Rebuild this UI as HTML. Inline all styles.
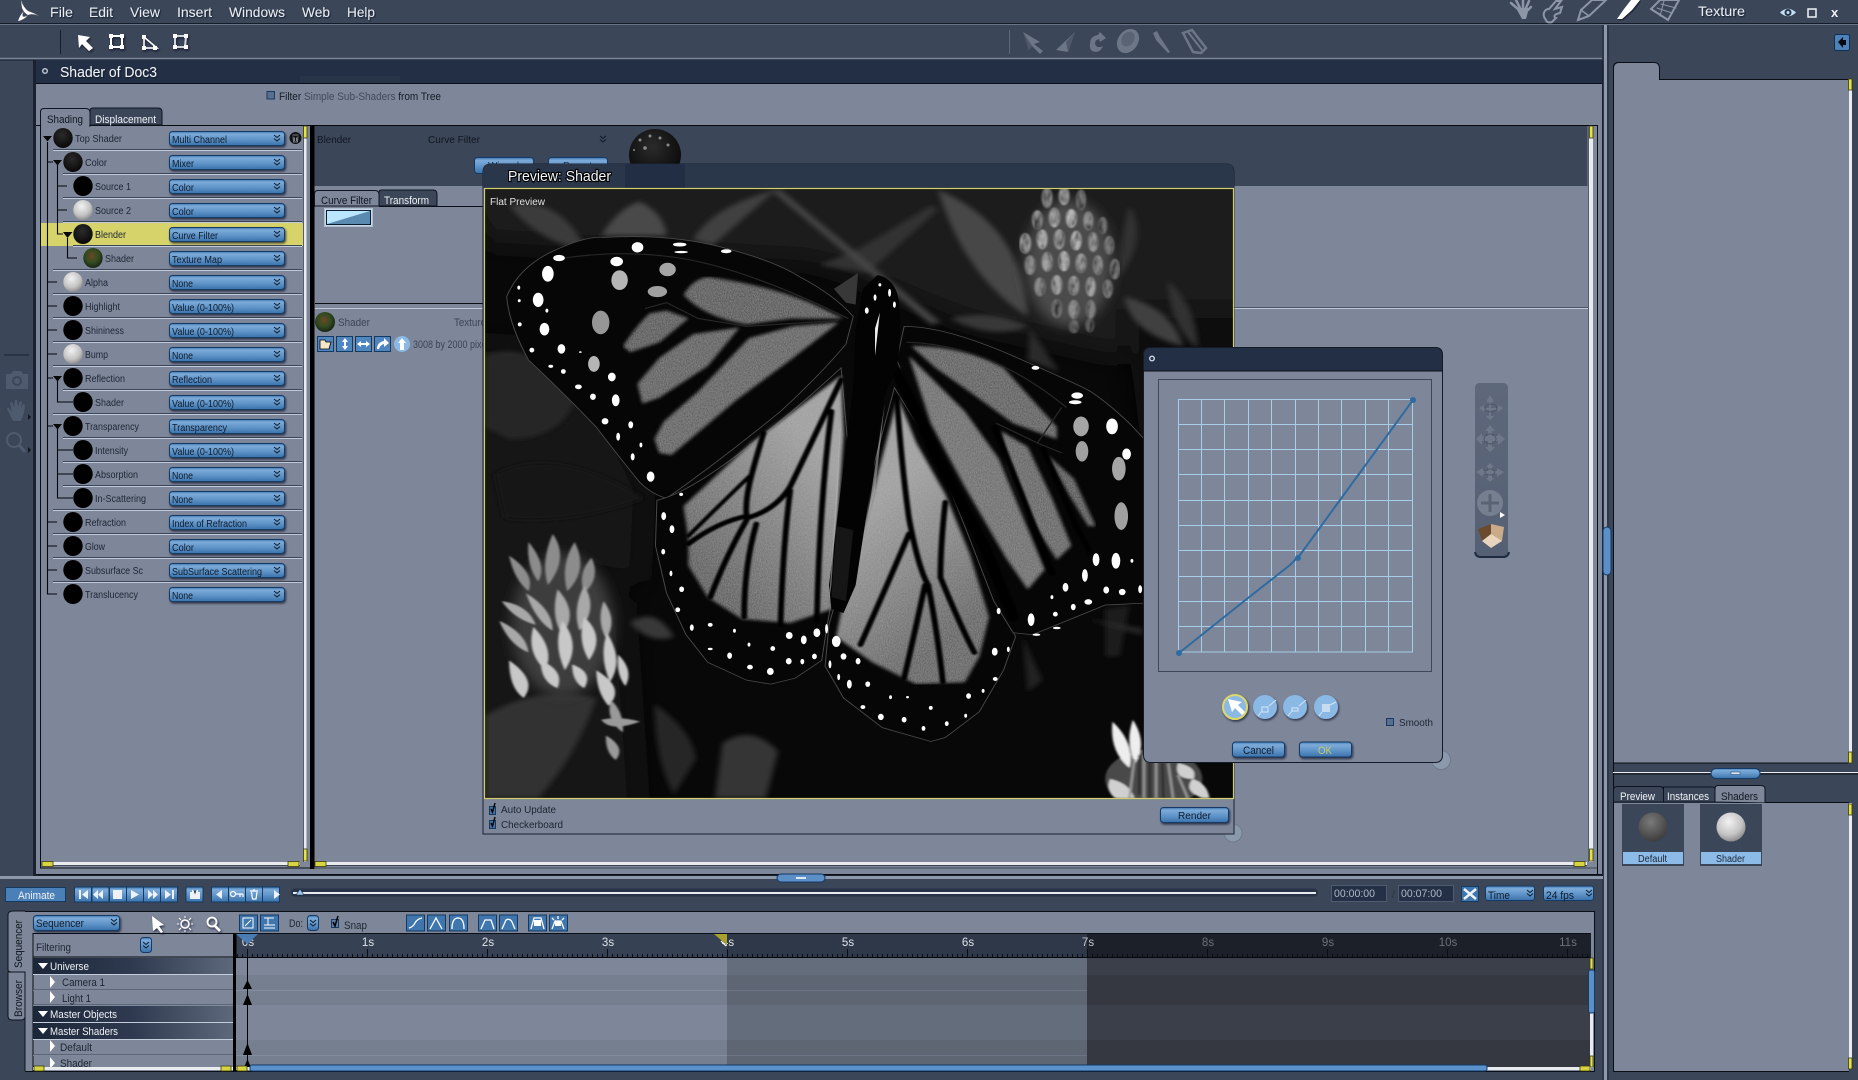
<!DOCTYPE html>
<html lang="en"><head><meta charset="utf-8"><title>Shader of Doc3</title>
<style>
html,body{margin:0;padding:0;background:#3b4658;width:1858px;height:1080px;overflow:hidden}
svg{display:block}
text{font-family:"Liberation Sans",sans-serif;font-size:10px;fill:#1d2532}
.l{fill:#1e2633}
.t{fill:#10161f}
.w{fill:#f0f3f7}
.m{font-size:14px;fill:#e9edf3;filter:url(#ts)}
.d{fill:#0f1b2b}
</style></head><body>
<svg xmlns="http://www.w3.org/2000/svg" width="1858" height="1080" viewBox="0 0 1858 1080">
<defs>
<linearGradient id="bl" x1="0" y1="0" x2="0" y2="1"><stop offset="0" stop-color="#3e76b0"/><stop offset=".18" stop-color="#7cabd9"/><stop offset=".55" stop-color="#6195c9"/><stop offset="1" stop-color="#3a72ab"/></linearGradient>
<linearGradient id="rowd" x1="0" y1="0" x2="1" y2="0"><stop offset="0" stop-color="#1c2639"/><stop offset=".5" stop-color="#2f3a50"/><stop offset="1" stop-color="#5d687b"/></linearGradient>
<linearGradient id="nav" x1="0" y1="0" x2="0" y2="1"><stop offset="0" stop-color="#5e687b"/><stop offset="1" stop-color="#566074"/></linearGradient>
<linearGradient id="hl" gradientUnits="userSpaceOnUse" x1="740" y1="720" x2="440" y2="940"><stop offset="0" stop-color="#a0a0a0"/><stop offset=".5" stop-color="#808080"/><stop offset="1" stop-color="#606060"/></linearGradient>
<linearGradient id="hr" gradientUnits="userSpaceOnUse" x1="800" y1="800" x2="1040" y2="1060"><stop offset="0" stop-color="#a0a0a0"/><stop offset=".5" stop-color="#858585"/><stop offset="1" stop-color="#656565"/></linearGradient>
<radialGradient id="sw" cx=".42" cy=".32" r=".75"><stop offset="0" stop-color="#f2f2f2"/><stop offset=".6" stop-color="#c4c4c4"/><stop offset="1" stop-color="#7f7f7f"/></radialGradient>
<radialGradient id="sg" cx=".42" cy=".32" r=".75"><stop offset="0" stop-color="#7a7a7a"/><stop offset="1" stop-color="#383838"/></radialGradient>
<radialGradient id="st" cx=".45" cy=".35" r=".7"><stop offset="0" stop-color="#2b2b2b"/><stop offset="1" stop-color="#060606"/></radialGradient>
<radialGradient id="sv" cx=".45" cy=".4" r=".65"><stop offset="0" stop-color="#6a4a24"/><stop offset=".55" stop-color="#2f4a20"/><stop offset="1" stop-color="#141d12"/></radialGradient>
<filter id="ts" x="-10%" y="-20%" width="120%" height="150%"><feDropShadow dx="1" dy="1" stdDeviation=".6" flood-color="#10182a" flood-opacity=".9"/></filter>
<filter id="sh" x="-30%" y="-30%" width="170%" height="170%"><feDropShadow dx="1" dy="1.5" stdDeviation="1" flood-color="#101826" flood-opacity=".75"/></filter>
<filter id="b35" x="-50%" y="-50%" width="200%" height="200%"><feGaussianBlur stdDeviation="35"/></filter>
<filter id="b10" x="-50%" y="-50%" width="200%" height="200%"><feGaussianBlur stdDeviation="14"/></filter>
<filter id="b7" x="-20%" y="-20%" width="140%" height="140%"><feGaussianBlur stdDeviation="6"/></filter>
<filter id="b4" x="-20%" y="-20%" width="140%" height="140%"><feGaussianBlur stdDeviation="4"/></filter>
<filter id="b2" x="-20%" y="-20%" width="140%" height="140%"><feGaussianBlur stdDeviation="2"/></filter>
<filter id="n" x="0" y="0" width="100%" height="100%"><feTurbulence type="fractalNoise" baseFrequency=".5 .25" numOctaves="2" seed="4"/><feColorMatrix values="0 0 0 0 .6  0 0 0 0 .6  0 0 0 0 .6  .45 0 0 0 -.12"/><feComposite in2="SourceAlpha" operator="in"/><feMerge><feMergeNode in="SourceGraphic"/><feMergeNode/></feMerge></filter>
<filter id="f" x="0" y="0" width="100%" height="100%"><feTurbulence type="fractalNoise" baseFrequency=".07 .035" numOctaves="2" seed="9"/><feColorMatrix values="0 0 0 0 0  0 0 0 0 0  0 0 0 0 0  1.800 0 0 0 -.62"/><feComposite in2="SourceAlpha" operator="in"/><feMerge><feMergeNode in="SourceGraphic"/><feMergeNode/></feMerge></filter>
<clipPath id="img"><rect x="485" y="189" width="748" height="609"/></clipPath>
<clipPath id="trackc"><rect x="236" y="957" width="1355" height="110"/></clipPath>
<clipPath id="listc"><rect x="33" y="957" width="200" height="110"/></clipPath>
<pattern id="ticks" x="247" y="954" width="5" height="3" patternUnits="userSpaceOnUse"><rect width="1" height="3" fill="#0a0d14"/></pattern>
<g id="chev" fill="none" stroke="#0e1a2a" stroke-width="1"><path d="M-3-3 0-.5 3-3"/><path d="M-3 .5 0 3 3 .5"/></g>
<g id="dd"><rect x=".5" y=".5" width="115" height="14" rx="3" fill="url(#bl)" stroke="#133a66" filter="url(#sh)"/><use href="#chev" x="108" y="7"/></g>
<g id="btn"><rect x=".5" y=".5" width="17" height="15" fill="url(#bl)" stroke="#123a63"/></g>
<g id="bt2"><rect x=".5" y=".5" width="18" height="16" fill="#3f76ae" stroke="#123a63"/></g>
</defs>

<!-- base -->
<rect width="1858" height="1080" fill="#3b4658"/>
<path d="M0 23.5H1858" stroke="#141c2a" stroke-width="1"/><path d="M0 24.5H1858" stroke="#697488"/>
<path d="M0 58.5H1602" stroke="#7a8597" stroke-width="1.4"/><path d="M0 60H1602" stroke="#1a2333"/>
<path d="M1603 25V1080" stroke="#1f2837"/><rect x="1604" y="25" width="3" height="1055" fill="#8d98aa"/><path d="M1608 25V1080" stroke="#1f2837"/>

<!-- logo/menu -->
<path d="M21 0Q23 7 28 11Q34 13 40 16.500Q33 13 28 15Q24 13 22 8Q21.500 4 21 0Z" fill="#fff"/>
<path d="M24 11Q20 15 18 21Q24 20 28 15Q24 18 22.500 16Q22.500 13 24 11Z" fill="#fff"/>
<text class="m" x="50" y="17" textLength="23" lengthAdjust="spacingAndGlyphs">File</text>
<text class="m" x="89" y="17" textLength="24" lengthAdjust="spacingAndGlyphs">Edit</text>
<text class="m" x="130" y="17" textLength="30" lengthAdjust="spacingAndGlyphs">View</text>
<text class="m" x="177" y="17" textLength="35" lengthAdjust="spacingAndGlyphs">Insert</text>
<text class="m" x="229" y="17" textLength="56" lengthAdjust="spacingAndGlyphs">Windows</text>
<text class="m" x="302" y="17" textLength="28" lengthAdjust="spacingAndGlyphs">Web</text>
<text class="m" x="347" y="17" textLength="28" lengthAdjust="spacingAndGlyphs">Help</text>

<!-- top right -->
<g fill="none" stroke="#8c96a7" stroke-linecap="round">
<path d="M1516 8 1522 19 1526 19 1529 8Z" fill="#8c96a7" stroke="none"/>
<path d="M1518 9 1511 3M1520 8 1516 0M1523 8V0M1526 8 1529 1" stroke-width="2.500"/><path d="M1528 10 1531 7" stroke-width="2.500"/>
<path d="M1546 20C1541 14 1545 9 1549 9L1556 1 1561 1 1555 9 1562 7 1560 13C1554 14 1553 17 1556 18L1552 22C1549 23 1546 22 1546 20Z" stroke-width="2"/>
<path d="M1578 20 1581 10 1592 0H1606L1589 16Z" stroke-width="2"/><path d="M1581 10 1589 16" stroke-width="1.500"/>
<path d="M1651 9 1660 0 1679 0 1668 20Z" stroke-width="2"/>
<path d="M1657 8 1672 13M1661 4 1676 8M1664 1 1660 16" stroke-width="1"/>
</g>
<path d="M1617 19 1624 9 1631 0 1640 0 1632 10 1622 19Z" fill="#fff" filter="url(#ts)"/>
<text class="m" x="1698" y="16" textLength="47" lengthAdjust="spacingAndGlyphs">Texture</text>
<path d="M1780 12.500Q1788 5 1796 12.500Q1788 20 1780 12.500Z" fill="#c5e1f5"/><circle cx="1788" cy="12.500" r="3.500" fill="#27354a"/><circle cx="1788" cy="12.500" r="1.500" fill="#c5e1f5"/>
<rect x="1808" y="9" width="8" height="8" fill="none" stroke="#f0f3f7" stroke-width="1.500"/>
<text x="1831" y="17" style="font-size:13px;font-weight:bold;fill:#f0f3f7">x</text>

<!-- toolbars -->
<path d="M60.500 30V54" stroke="#171f2c"/><path d="M1009.500 30V54" stroke="#5c6779"/>
<g filter="url(#sh)">
<path d="M78 35 90 37 86 41 93 48 89 51 82 44 79 48Z" fill="#fff"/>
<path d="M111 36H122V47H111Z" fill="none" stroke="#fff" stroke-width="2"/><g fill="#fff"><rect x="109" y="34" width="4" height="4"/><rect x="120" y="34" width="4" height="4"/><rect x="109" y="45" width="4" height="4"/><rect x="120" y="45" width="4" height="4"/></g>
<path d="M144 37V48H157Z" fill="none" stroke="#fff" stroke-width="1.500"/><g fill="#fff"><rect x="142" y="35" width="4" height="4"/><rect x="142" y="46" width="4" height="4"/><rect x="153" y="46" width="4" height="4"/></g>
<path d="M175 36H186L185 47H175Z" fill="none" stroke="#cfd5df" stroke-width="2"/><g fill="#fff"><rect x="173" y="34" width="4" height="4"/><rect x="184" y="34" width="4" height="4"/><rect x="173" y="45" width="4" height="4"/><rect x="184" y="45" width="4" height="4"/></g>
</g>
<g fill="#6d7686">
<path d="M1023 32 1040 42 1034 44 1043 51 1040 54 1032 46 1029 50Z"/><path d="M1023 32 1032 46 1029 50Z" fill="#4f5868"/>
<path d="M1075 32 1068 52 1056 50Z"/><path d="M1075 32 1068 52 1066 42Z" fill="#4f5868"/>
<path d="M1090 44Q1090 36 1098 35L1100 32 1106 38 1100 42 1099 39Q1095 40 1095 44Q1097 49 1103 46Q1100 54 1092 51Q1089 48 1090 44Z"/>
<ellipse cx="1128" cy="41" rx="10" ry="13" transform="rotate(35 1128 41)"/><ellipse cx="1128" cy="39" rx="6" ry="8" fill="#5a6372" transform="rotate(35 1128 39)"/>
<path d="M1153 33 1157 31 1160 37 1170 52 1168 53 1156 40Z"/>
<path d="M1183 33 1192 30 1206 48 1201 53 1193 52Z" fill="none" stroke="#6d7686" stroke-width="2.500"/><path d="M1188 32 1202 50" stroke="#6d7686" stroke-width="2"/>
</g>
<rect x="1834.500" y="34.500" width="15" height="16" rx="2" fill="#4d82b8" stroke="#0f2f55"/><path d="M1838 42 1843 37V40H1846V45H1843V48Z" fill="#060a10"/>

<!-- left strip icons -->
<path d="M4 355H29" stroke="#1a2230"/>
<g fill="#4e5a6e">
<path d="M6 374H11L13 371H21L23 374H28V389H6Z"/><circle cx="17" cy="381" r="5" fill="#3b4658"/><circle cx="17" cy="381" r="3"/>
<path d="M10 403 12 402 14 407 15 400 17 400 18 407 20 401 22 402 21 409 23 404 25 405 24 413 21 421H13L7 409 8 407 12 412Z"/>
<circle cx="14" cy="440" r="7" fill="none" stroke="#4e5a6e" stroke-width="2"/><path d="M19 445 25 452" stroke="#4e5a6e" stroke-width="3"/>
</g>
<path d="M28 414 31 417 28 420ZM28 447 31 450 28 453Z" fill="#11161f"/>

<!-- shader panel -->
<rect x="33" y="60" width="1570" height="816" fill="#1a2231"/>
<rect x="36" y="60" width="1566" height="23" fill="#232f44"/>
<rect x="300" y="76" width="100" height="7" fill="#283448"/>
<rect x="36" y="84" width="1566" height="790" fill="#7d8799"/>
<path d="M36 83.500H1602" stroke="#0a0e16"/>
<circle cx="45" cy="71" r="2.300" fill="none" stroke="#b9c3d2" stroke-width="1.500"/>
<text class="w" x="60" y="77" style="font-size:14.500px;filter:url(#ts)" textLength="97" lengthAdjust="spacingAndGlyphs">Shader of Doc3</text>
<rect x="267" y="91.500" width="7.500" height="7.500" fill="#586f90" stroke="#1b3a63"/>
<text x="279" y="100" style="font-size:11px" textLength="162" lengthAdjust="spacingAndGlyphs"><tspan fill="#141b26">Filter </tspan><tspan fill="#3f4a5b">Simple Sub-Shaders </tspan><tspan fill="#141b26">from Tree</tspan></text>

<!-- tabs -->
<path d="M36 125.500H1597" stroke="#070a10" stroke-width="1"/>
<path d="M90 125V111Q90 108 93 108H158Q162 108 162 112V125Z" fill="#3b4658" stroke="#0e1420"/>
<path d="M40.500 125V112Q40.500 108.500 44 108.500H86Q89.500 108.500 90 112V126H40.500Z" fill="#7d8799" stroke="#0e1420"/>
<rect x="41" y="124" width="48" height="3" fill="#7d8799"/>
<text class="t" x="47" y="123" style="font-size:11px" textLength="36" lengthAdjust="spacingAndGlyphs">Shading</text>
<text class="w" x="95" y="123" style="font-size:11px" textLength="61" lengthAdjust="spacingAndGlyphs">Displacement</text>
<path d="M40.500 125V868H310" fill="none" stroke="#0a0e16"/>
<path d="M1597.500 125V875" stroke="#0a0e16"/>
<path d="M36 874.500H1602" stroke="#0a0e16"/>

<!-- tree -->
<rect x="41" y="223" width="262" height="23" fill="#d6d36b"/>
<path d="M53 150H302M63 174H302M63 198H302M63 222H302M73 246H302M53 270H302M53 294H302M53 318H302M53 342H302M53 366H302M63 390H302M53 414H302M63 438H302M63 462H302M63 486H302M53 510H302M53 534H302M53 558H302M53 582H302" stroke="#c1cad9" stroke-width="1" transform="translate(0,.5)"/>
<path d="M53 149H302M63 173H302M63 197H302M63 221H302M73 245H302M53 269H302M53 293H302M53 317H302M53 341H302M53 365H302M63 389H302M53 413H302M63 437H302M63 461H302M63 485H302M53 509H302M53 533H302M53 557H302M53 581H302" stroke="#3b4658" stroke-width="1" transform="translate(0,.5)"/>
<path d="M47.500 142V594H57M47.500 162H53M47.500 282H57M47.500 306H57M47.500 330H57M47.500 354H57M47.500 378H53M47.500 426H53M47.500 522H57M47.500 546H57M47.500 570H57M57.500 164V234H63M57.500 186H67M57.500 210H67M67.500 238V258H77M57.500 380V402H73M57.500 428V498H73M57.500 450H73M57.500 474H73" fill="none" stroke="#05070b" stroke-width="1.100"/>
<path d="M43 136H52L47.500 141.500ZM53 160H62L57.500 165.500ZM63 232H72.500L67.500 238ZM53 376H62L57.500 381.500ZM53 424H62L57.500 429.500Z" fill="#05070b"/>
<g>
<ellipse cx="63" cy="138" rx="9.700" ry="10" fill="url(#st)"/>
<ellipse cx="73" cy="162" rx="9.700" ry="10" fill="url(#st)"/>
<ellipse cx="83" cy="186" rx="9.700" ry="10" fill="#000"/>
<ellipse cx="83" cy="210" rx="9.700" ry="10" fill="url(#sw)"/>
<ellipse cx="83" cy="234" rx="9.700" ry="10" fill="url(#st)"/>
<ellipse cx="93" cy="258" rx="9.700" ry="10" fill="url(#sv)"/>
<ellipse cx="73" cy="282" rx="9.700" ry="10" fill="url(#sw)"/>
<ellipse cx="73" cy="306" rx="9.700" ry="10" fill="#000"/>
<ellipse cx="73" cy="330" rx="9.700" ry="10" fill="#000"/>
<ellipse cx="73" cy="354" rx="9.700" ry="10" fill="url(#sw)"/>
<ellipse cx="73" cy="378" rx="9.700" ry="10" fill="#000"/>
<ellipse cx="83" cy="402" rx="9.700" ry="10" fill="#000"/>
<ellipse cx="73" cy="426" rx="9.700" ry="10" fill="#000"/>
<ellipse cx="83" cy="450" rx="9.700" ry="10" fill="#000"/>
<ellipse cx="83" cy="474" rx="9.700" ry="10" fill="#000"/>
<ellipse cx="83" cy="498" rx="9.700" ry="10" fill="#000"/>
<ellipse cx="73" cy="522" rx="9.700" ry="10" fill="#000"/>
<ellipse cx="73" cy="546" rx="9.700" ry="10" fill="#000"/>
<ellipse cx="73" cy="570" rx="9.700" ry="10" fill="#000"/>
<ellipse cx="73" cy="594" rx="9.700" ry="10" fill="#000"/>
</g>
<g transform="translate(0,1)">
<text class="l" x="75" y="141" textLength="47" lengthAdjust="spacingAndGlyphs">Top Shader</text>
<text class="l" x="85" y="165" textLength="22" lengthAdjust="spacingAndGlyphs">Color</text>
<text class="l" x="95" y="189" textLength="36" lengthAdjust="spacingAndGlyphs">Source 1</text>
<text class="l" x="95" y="213" textLength="36" lengthAdjust="spacingAndGlyphs">Source 2</text>
<text class="l" x="95" y="237" textLength="31" lengthAdjust="spacingAndGlyphs">Blender</text>
<text class="l" x="105" y="261" textLength="29" lengthAdjust="spacingAndGlyphs">Shader</text>
<text class="l" x="85" y="285" textLength="23" lengthAdjust="spacingAndGlyphs">Alpha</text>
<text class="l" x="85" y="309" textLength="35" lengthAdjust="spacingAndGlyphs">Highlight</text>
<text class="l" x="85" y="333" textLength="39" lengthAdjust="spacingAndGlyphs">Shininess</text>
<text class="l" x="85" y="357" textLength="23" lengthAdjust="spacingAndGlyphs">Bump</text>
<text class="l" x="85" y="381" textLength="40" lengthAdjust="spacingAndGlyphs">Reflection</text>
<text class="l" x="95" y="405" textLength="29" lengthAdjust="spacingAndGlyphs">Shader</text>
<text class="l" x="85" y="429" textLength="54" lengthAdjust="spacingAndGlyphs">Transparency</text>
<text class="l" x="95" y="453" textLength="33" lengthAdjust="spacingAndGlyphs">Intensity</text>
<text class="l" x="95" y="477" textLength="43" lengthAdjust="spacingAndGlyphs">Absorption</text>
<text class="l" x="95" y="501" textLength="51" lengthAdjust="spacingAndGlyphs">In-Scattering</text>
<text class="l" x="85" y="525" textLength="41" lengthAdjust="spacingAndGlyphs">Refraction</text>
<text class="l" x="85" y="549" textLength="20" lengthAdjust="spacingAndGlyphs">Glow</text>
<text class="l" x="85" y="573" textLength="58" lengthAdjust="spacingAndGlyphs">Subsurface Sc</text>
<text class="l" x="85" y="597" textLength="53" lengthAdjust="spacingAndGlyphs">Translucency</text>
</g>
<use href="#dd" x="169" y="131"/><use href="#dd" x="169" y="155"/><use href="#dd" x="169" y="179"/><use href="#dd" x="169" y="203"/><use href="#dd" x="169" y="227"/><use href="#dd" x="169" y="251"/><use href="#dd" x="169" y="275"/><use href="#dd" x="169" y="299"/><use href="#dd" x="169" y="323"/><use href="#dd" x="169" y="347"/><use href="#dd" x="169" y="371"/><use href="#dd" x="169" y="395"/><use href="#dd" x="169" y="419"/><use href="#dd" x="169" y="443"/><use href="#dd" x="169" y="467"/><use href="#dd" x="169" y="491"/><use href="#dd" x="169" y="515"/><use href="#dd" x="169" y="539"/><use href="#dd" x="169" y="563"/><use href="#dd" x="169" y="587"/>
<g transform="translate(0,1)">
<text class="d" x="172" y="142" textLength="55" lengthAdjust="spacingAndGlyphs">Multi Channel</text>
<text class="d" x="172" y="166" textLength="22" lengthAdjust="spacingAndGlyphs">Mixer</text>
<text class="d" x="172" y="190" textLength="22" lengthAdjust="spacingAndGlyphs">Color</text>
<text class="d" x="172" y="214" textLength="22" lengthAdjust="spacingAndGlyphs">Color</text>
<text class="d" x="172" y="238" textLength="46" lengthAdjust="spacingAndGlyphs">Curve Filter</text>
<text class="d" x="172" y="262" textLength="50" lengthAdjust="spacingAndGlyphs">Texture Map</text>
<text class="d" x="172" y="286" textLength="21" lengthAdjust="spacingAndGlyphs">None</text>
<text class="d" x="172" y="310" textLength="62" lengthAdjust="spacingAndGlyphs">Value (0-100%)</text>
<text class="d" x="172" y="334" textLength="62" lengthAdjust="spacingAndGlyphs">Value (0-100%)</text>
<text class="d" x="172" y="358" textLength="21" lengthAdjust="spacingAndGlyphs">None</text>
<text class="d" x="172" y="382" textLength="40" lengthAdjust="spacingAndGlyphs">Reflection</text>
<text class="d" x="172" y="406" textLength="62" lengthAdjust="spacingAndGlyphs">Value (0-100%)</text>
<text class="d" x="172" y="430" textLength="55" lengthAdjust="spacingAndGlyphs">Transparency</text>
<text class="d" x="172" y="454" textLength="62" lengthAdjust="spacingAndGlyphs">Value (0-100%)</text>
<text class="d" x="172" y="478" textLength="21" lengthAdjust="spacingAndGlyphs">None</text>
<text class="d" x="172" y="502" textLength="21" lengthAdjust="spacingAndGlyphs">None</text>
<text class="d" x="172" y="526" textLength="75" lengthAdjust="spacingAndGlyphs">Index of Refraction</text>
<text class="d" x="172" y="550" textLength="22" lengthAdjust="spacingAndGlyphs">Color</text>
<text class="d" x="172" y="574" textLength="90" lengthAdjust="spacingAndGlyphs">SubSurface Scattering</text>
<text class="d" x="172" y="598" textLength="21" lengthAdjust="spacingAndGlyphs">None</text>
</g>
<circle cx="295.500" cy="138" r="6" fill="#111"/><path d="M292.500 135H298.500M293 136.500 293.500 142H297.500L298 136.500M294.500 137.500V141M296.500 137.500V141" stroke="#9aa3b2" stroke-width=".8" fill="none"/>

<!-- tree scrollbars -->
<rect x="303" y="126" width="3.500" height="736" fill="#e9ebee"/><rect x="303" y="126" width="1" height="736" fill="#555d6b"/>
<rect x="303.500" y="126" width="3.500" height="12" fill="#e4e245" stroke="#3b3a10" stroke-width=".8"/>
<rect x="303.500" y="849" width="3.500" height="12" fill="#e4e245" stroke="#3b3a10" stroke-width=".8"/>
<rect x="42" y="862" width="258" height="3" fill="#e9ebee"/><path d="M42 865.500H300" stroke="#444c5a"/>
<rect x="42" y="861.500" width="11" height="5" fill="#d6d43f" stroke="#3b3a10" stroke-width=".8"/>
<rect x="288" y="861.500" width="11" height="5" fill="#d6d43f" stroke="#3b3a10" stroke-width=".8"/>
<path d="M40 868H310" stroke="#0a0e16"/>
<rect x="310" y="125" width="4.500" height="744" fill="#000"/>

<!-- right editor -->
<rect x="314.500" y="126" width="1273" height="60" fill="#3b4658"/>
<text class="t" x="317" y="143" textLength="34" lengthAdjust="spacingAndGlyphs">Blender</text>
<text class="t" x="428" y="143" textLength="52" lengthAdjust="spacingAndGlyphs">Curve Filter</text>
<use href="#chev" x="603" y="139"/>
<circle cx="655" cy="155" r="26" fill="url(#st)"/>
<g fill="#8a8a8a"><circle cx="640" cy="140" r="1.500"/><circle cx="650" cy="136" r="1.500"/><circle cx="660" cy="138" r="1.500"/><circle cx="668" cy="145" r="1.500"/><circle cx="645" cy="148" r="1.800"/><circle cx="634" cy="150" r="1"/></g>
<rect x="474.500" y="157.500" width="59" height="16" rx="3" fill="url(#bl)" stroke="#133a66"/>
<rect x="548.500" y="157.500" width="59" height="16" rx="3" fill="url(#bl)" stroke="#133a66"/>
<text x="488" y="169" style="fill:#1e3350" textLength="31" lengthAdjust="spacingAndGlyphs">Wizard</text>
<text x="563" y="169" style="fill:#1e3350" textLength="29" lengthAdjust="spacingAndGlyphs">Parent</text>
<path d="M379 206V192Q379 190 382 190H433Q437 190 437 194V206Z" fill="#3b4658" stroke="#0e1420"/>
<path d="M314.500 206V194Q314.500 190.500 318 190.500H375Q378.500 190.500 379 194V206Z" fill="#7d8799" stroke="#0e1420"/>
<path d="M379 206.500H490M314.500 206.500H315" stroke="#0a0e16"/>
<text class="t" x="321" y="204" textLength="51" lengthAdjust="spacingAndGlyphs" style="font-size:11px">Curve Filter</text>
<text class="w" x="384" y="204" textLength="45" lengthAdjust="spacingAndGlyphs" style="font-size:11px">Transform</text>
<rect x="324.500" y="208.500" width="48" height="18" fill="#c8d6e6" stroke="#aebfd3"/>
<rect x="326.500" y="210.500" width="44" height="14" fill="#b9e6fd" stroke="#0b1b30"/>
<path d="M327 224 370 211V224Z" fill="#5b8ab0"/>
<path d="M315 303.500H484" stroke="#0a0e16"/><path d="M1234 307.500H1590" stroke="#4a5566"/><path d="M315 308.500H1590" stroke="#c0c9d8"/>
<ellipse cx="325" cy="322" rx="10" ry="10" fill="url(#sv)"/>
<text x="338" y="326" textLength="32" lengthAdjust="spacingAndGlyphs" style="fill:#3b4556;font-size:11px">Shader</text>
<text x="454" y="326" textLength="32" lengthAdjust="spacingAndGlyphs" style="fill:#3b4556;font-size:11px">Texture</text>
<g><rect x="317.500" y="336.500" width="16" height="15" fill="#4f86c0" stroke="#123a63"/><rect x="336.500" y="336.500" width="16" height="15" fill="#4f86c0" stroke="#123a63"/><rect x="355.500" y="336.500" width="16" height="15" fill="#4f86c0" stroke="#123a63"/><rect x="374.500" y="336.500" width="16" height="15" fill="#4f86c0" stroke="#123a63"/><circle cx="402" cy="344" r="8" fill="#8ab9e6"/>
<path d="M320 340H325L326 342H331L329 349H320Z" fill="#f5e6c8" stroke="#000" stroke-width=".8"/>
<path d="M345 338 348 342H346V346H348L345 350 342 346H344V342H342Z" fill="#fff"/>
<path d="M357 344 361 341V343H366V341L370 344 366 347V345H361V347Z" fill="#fff"/>
<path d="M377 349Q377 342 384 341V338L389 343 384 347V344Q380 345 379 349Z" fill="#fff"/>
<path d="M402 338 406 343H404V350H400V343H398Z" fill="#fff"/></g>
<text x="413" y="348" style="fill:#3b4556;font-size:11px" textLength="80" lengthAdjust="spacingAndGlyphs">3008 by 2000 pixels</text>
<rect x="1589" y="126" width="4" height="736" fill="#e9ebee"/><path d="M1588.500 126V862" stroke="#555d6b"/>
<rect x="1589.500" y="126" width="3.500" height="12" fill="#e4e245" stroke="#3b3a10" stroke-width=".8"/>
<rect x="1589.500" y="849" width="3.500" height="12" fill="#e4e245" stroke="#3b3a10" stroke-width=".8"/>
<rect x="315" y="862" width="1272" height="3" fill="#e9ebee"/><path d="M315 865.500H1587M314 868H1597" stroke="#3c4452"/>
<rect x="315" y="861.500" width="11" height="5" fill="#d6d43f" stroke="#3b3a10" stroke-width=".8"/>
<rect x="1574" y="861.500" width="11" height="5" fill="#d6d43f" stroke="#3b3a10" stroke-width=".8"/>

<!-- navigator -->
<rect x="1474.500" y="382.500" width="34" height="174" rx="5" fill="url(#nav)" stroke="#7d8799"/><path d="M1475 552Q1476 557 1480 557H1503Q1508 557 1509 552" fill="none" stroke="#1d2a40" stroke-width="2"/>
<g fill="#6f7888">
<path d="M1490 395 1494 402H1491V408H1498V405L1503 408 1498 412V410H1491V416H1494L1490 420 1486 416H1489V410H1484V412L1479 408 1484 405V408H1489V402H1486Z"/>
<ellipse cx="1491" cy="408" rx="6" ry="4" fill="none" stroke="#4f5868"/>
<path d="M1490 425 1495 431H1492V436H1498V433L1505 439 1498 445V441H1492V447H1495L1490 452 1485 447H1488V441H1482V445L1476 439 1482 433V436H1488V431H1485Z"/>
<ellipse cx="1490" cy="439" rx="6" ry="5" fill="none" stroke="#4f5868"/>
<path d="M1490 463 1494 467H1492V471H1497V468L1504 472 1497 477V474H1492V478H1494L1490 482 1486 478H1488V474H1483V477L1476 472 1483 468V471H1488V467H1486Z"/>
<ellipse cx="1490" cy="472" rx="5" ry="3" fill="none" stroke="#4f5868"/>
<circle cx="1490" cy="503" r="13" fill="#767f8f"/><path d="M1490 494V512M1481 503H1499" stroke="#5a6373" stroke-width="3"/>
</g>
<path d="M1500 512 1505 515 1500 518Z" fill="#fff"/>
<path d="M1478 529 1491 524V547L1482 541Z" fill="#6b4a2e"/><path d="M1491 524 1504 527 1502 541 1491 547Z" fill="#c9ab8a"/><path d="M1482 541 1491 548 1502 541 1491 534Z" fill="#e8d4bf"/>

<!-- preview window -->
<circle cx="1233" cy="833" r="9" fill="#8b99ad" stroke="#6f7a8b"/>
<path d="M483 834V172Q483 164 491 164H1226Q1234 164 1234 172V834Z" fill="#7d8799" stroke="#1a2231"/>
<path d="M483 188V172Q483 164 491 164H1226Q1234 164 1234 172V188Z" fill="#2a3649"/>
<rect x="625" y="164" width="60" height="24" fill="#222e44"/>
<rect x="484" y="188.500" width="749" height="610" fill="#080808"/>
<g clip-path="url(#img)"><g transform="translate(480,190) scale(.4847,.3953)">
<!-- background broad tones -->
<g filter="url(#b35)">
<path d="M-50 -50H1620V300L1320 420 1000 330 700 180 0 130Z" fill="#1c1c1c"/>
<path d="M1330 300H1620V1000H1400Z" fill="#101010"/>
<path d="M-50 380 200 400 340 760 330 1000-50 860Z" fill="#121212"/>
<path d="M-50 860 300 1050 330 1600H-50Z" fill="#141414"/>
</g>
<!-- leaves -->
<g filter="url(#b7)">
<path d="M60 40Q160 10 220 150Q130 140 60 40Z" fill="#3a3a3a"/>
<path d="M440 125Q480 40 610 0L480 140Z" fill="#404040"/>
<path d="M250 115Q290 40 330 30 380 60 385 115Z" fill="#4a4a4a"/>
<path d="M700 190 780 150 930 40 945 50 800 210Z" fill="#333"/>
<path d="M945 0Q1120 90 1130 320 1000 220 945 0Z" fill="#464646"/>
<path d="M620 0 950 335 930 340 600 0Z" fill="#444"/>
<path d="M1330 270Q1430 300 1450 395 1340 360 1330 270Z" fill="#404040"/>
<path d="M1420 230Q1480 300 1480 400 1420 340 1420 230Z" fill="#333"/>
<path d="M1340 40Q1380 120 1320 220 1320 120 1340 40Z" fill="#303030"/>
<path d="M970 325Q1060 300 1130 345 1060 380 970 325Z" fill="#383838"/>
<path d="M1135 350 1195 460 1130 430Z" fill="#2c2c2c"/>
<path d="M10 420Q100 370 200 520 170 630 60 630L10 600Z" fill="#272727"/>
<path d="M30 720Q150 640 340 780 180 850 50 830Z" fill="#181818"/>
<path d="M310 1095Q360 1050 400 1130 350 1150 310 1095Z" fill="#383838"/>
<path d="M10 1330Q120 1250 240 1285 200 1430 120 1538H10Z" fill="#303030"/>
<path d="M360 1300Q440 1370 445 1440L400 1530Q360 1440 360 1300Z" fill="#262626"/>
<path d="M500 1400Q560 1350 615 1420L590 1538H485Z" fill="#343434"/>
<path d="M1120 1130 1160 1240 1130 1270Z" fill="#222"/>
<path d="M1290 1060 1340 1050 1320 1180 1290 1180Z" fill="#1e1e1e"/>
<path d="M1250 1085 1366 1125 1366 1110Z" fill="#2a2a2a"/>
</g>
<!-- top right flower -->
<ellipse cx="1215" cy="185" rx="90" ry="160" fill="#4c4c4c" filter="url(#b10)"/>
<g filter="url(#f)"><g filter="url(#b2)">
<ellipse cx="1170" cy="20" rx="11" ry="26" fill="#8a8a8a"/><ellipse cx="1205" cy="15" rx="11" ry="24" fill="#9e9e9e"/><ellipse cx="1240" cy="25" rx="10" ry="26" fill="#7e7e7e"/>
<ellipse cx="1150" cy="75" rx="11" ry="24" fill="#909090"/><ellipse cx="1185" cy="70" rx="11" ry="25" fill="#adadad"/><ellipse cx="1220" cy="72" rx="11" ry="24" fill="#b5b5b5"/><ellipse cx="1255" cy="78" rx="10" ry="24" fill="#909090"/><ellipse cx="1285" cy="90" rx="9" ry="22" fill="#747474"/>
<ellipse cx="1125" cy="135" rx="12" ry="26" fill="#9a9a9a"/><ellipse cx="1160" cy="125" rx="11" ry="25" fill="#b0b0b0"/><ellipse cx="1195" cy="125" rx="11" ry="26" fill="#9c9c9c"/><ellipse cx="1230" cy="128" rx="11" ry="25" fill="#b2b2b2"/><ellipse cx="1265" cy="132" rx="10" ry="25" fill="#969696"/><ellipse cx="1298" cy="140" rx="10" ry="24" fill="#7e7e7e"/>
<ellipse cx="1135" cy="190" rx="11" ry="25" fill="#8c8c8c"/><ellipse cx="1170" cy="182" rx="11" ry="25" fill="#a2a2a2"/><ellipse cx="1205" cy="180" rx="11" ry="26" fill="#b0b0b0"/><ellipse cx="1240" cy="185" rx="11" ry="25" fill="#9a9a9a"/><ellipse cx="1275" cy="190" rx="10" ry="25" fill="#8e8e8e"/><ellipse cx="1310" cy="200" rx="10" ry="26" fill="#808080"/>
<ellipse cx="1155" cy="245" rx="11" ry="24" fill="#8a8a8a"/><ellipse cx="1190" cy="240" rx="11" ry="25" fill="#a0a0a0"/><ellipse cx="1225" cy="242" rx="11" ry="25" fill="#9a9a9a"/><ellipse cx="1260" cy="245" rx="10" ry="25" fill="#a2a2a2"/><ellipse cx="1295" cy="250" rx="10" ry="24" fill="#808080"/>
<ellipse cx="1190" cy="300" rx="11" ry="24" fill="#7c7c7c"/><ellipse cx="1225" cy="302" rx="11" ry="24" fill="#8e8e8e"/><ellipse cx="1260" cy="302" rx="10" ry="24" fill="#7e7e7e"/>
<ellipse cx="1225" cy="345" rx="10" ry="18" fill="#6a6a6a"/><ellipse cx="1258" cy="342" rx="9" ry="18" fill="#666"/>
</g></g>
<!-- left flower -->
<ellipse cx="170" cy="1100" rx="105" ry="180" fill="#3c3c3c" filter="url(#b10)"/>
<g filter="url(#b2)">
<path d="M150 870Q125 940 140 1000 185 930 150 870ZM60 925Q70 985 100 1015 115 970 60 925ZM195 890Q165 950 180 1015 225 960 195 890ZM100 890Q95 950 120 990 140 950 100 890ZM230 930Q200 970 215 1020 250 980 230 930Z" fill="#8c8c8c"/>
<path d="M45 1040Q70 1085 115 1100 100 1050 45 1040ZM95 1020Q115 1090 150 1115 150 1060 95 1020ZM160 1010Q145 1080 170 1125 205 1070 160 1010ZM215 1000Q190 1060 205 1115 245 1060 215 1000ZM255 1040Q240 1090 260 1135 285 1090 255 1040ZM40 1090Q60 1150 100 1170 95 1120 40 1090Z" fill="#a8a8a8"/>
<path d="M110 1105Q95 1170 135 1215 155 1160 110 1105ZM170 1090Q150 1150 175 1215 210 1150 170 1090ZM215 1080Q200 1140 225 1190 260 1130 215 1080ZM262 1120Q245 1180 268 1245 298 1190 262 1120ZM60 1190Q60 1260 90 1285 120 1240 60 1190ZM125 1190Q125 1245 160 1260 175 1215 125 1190ZM190 1200Q190 1245 215 1260 235 1220 190 1200ZM240 1215Q240 1270 265 1305 302 1260 240 1215ZM285 1175Q280 1225 300 1255 318 1215 285 1175Z" fill="#c8c8c8"/>
<path d="M250 1340Q270 1372 330 1345 290 1330 250 1340ZM270 1290Q258 1340 295 1372 297 1320 270 1290ZM260 1380Q258 1422 280 1442 302 1410 260 1380Z" fill="#9a9a9a"/>
</g>
<!-- bottom right flower -->
<g filter="url(#b2)">
<ellipse cx="1390" cy="1490" rx="100" ry="75" fill="#4a4a4a"/>
<path d="M1305 1345Q1298 1420 1340 1462 1352 1400 1305 1345ZM1347 1340Q1330 1400 1352 1450 1378 1400 1347 1340Z" fill="#eee"/>
<path d="M1440 1450Q1430 1490 1472 1490 1482 1460 1440 1450ZM1470 1490Q1450 1520 1490 1538H1505Q1500 1500 1470 1490ZM1300 1490Q1290 1520 1310 1538H1350Q1340 1500 1300 1490Z" fill="#d0d0d0"/>
<path d="M1350 1440 1340 1538M1370 1430 1370 1538M1395 1445 1395 1538M1420 1450 1430 1538M1440 1480 1460 1538" stroke="#9a9a9a" stroke-width="5"/>
<path d="M1360 1430 1360 1530M1382 1440 1382 1538M1408 1450 1410 1538" stroke="#222" stroke-width="4"/>
</g>

<!-- wing silhouettes -->
<g fill="#060606" stroke="#4a4a4a" stroke-width="2">
<path d="M55 270Q80 195 150 155T255 120Q390 110 500 145T660 220Q730 265 770 320L755 390Q700 470 620 560 500 680 385 780 355 770 330 740 290 680 240 600 170 510 100 430 60 340 55 270Z"/>
<path d="M365 785Q420 770 520 680T745 450L770 800 725 1040 715 1110 705 1190 650 1235 600 1250 550 1240 470 1195 425 1125 385 1020 362 900Z"/>
<path d="M855 500 1000 790 1075 1060 1105 1130 1080 1215 1030 1320 960 1385 930 1395 830 1360 750 1285 712 1205 720 1100 790 800Z"/>
<path d="M875 345Q960 345 1100 420T1260 510Q1320 560 1370 630L1370 1045 1290 1050 1220 1085 1140 1125 1100 1120 1060 1040 1000 850 930 640 860 430Z"/>
</g>
<!-- grey cells -->
<g filter="url(#n)">
<g fill="#5a5a5a" filter="url(#b4)">
<path d="M420 265Q440 225 470 220 590 240 680 285L750 325 640 325 550 340Q460 320 420 265Z"/>
<path d="M295 395Q325 340 350 312L385 305 430 325 370 385 310 410Z"/>
<path d="M325 490 370 425 440 365 535 348 470 445 370 525 335 540Z" fill="#606060"/>
<path d="M360 630 380 585 450 510 555 375 645 345 740 335 640 430 530 530 395 670 370 665Z" fill="#646464"/>
<path d="M890 395Q1000 395 1080 450L1190 600 1190 630 1100 590 1010 510 940 450Z" fill="#606060"/>
<path d="M885 420 1000 560 1070 680 1165 960 1130 1010 1085 930 1000 750 930 590Z" fill="#707070"/>
<path d="M1075 610 1130 650 1180 780 1220 900 1190 935 1130 820 1090 700Z" fill="#666"/>
<path d="M1170 670 1225 730 1270 850 1255 850 1215 770Z" fill="#5a5a5a"/>
</g>
<g filter="url(#b4)">
<path d="M430 880 420 800 560 640 745 470 750 620 725 1060 640 1095 540 1085 470 1030 430 950Z" fill="url(#hl)"/>
<path d="M862 525 900 640 960 770 1010 920 1050 1080 1030 1180 1000 1245 900 1250 810 1195 735 1130 760 980 810 770Z" fill="url(#hr)"/>
</g>
</g>
<!-- veins -->
<g fill="none" stroke="#060606" stroke-linecap="round" stroke-linejoin="round" stroke-width="12" filter="url(#b2)">
<path d="M585 615C565 700 545 770 550 825"/><path d="M550 825Q490 840 430 895"/><path d="M555 725Q500 790 430 875" stroke-width="9"/>
<path d="M550 830Q610 810 640 750 680 650 745 480"/><path d="M550 835Q510 920 475 1030"/><path d="M570 845Q545 950 545 1080"/><path d="M640 760Q625 900 620 1100"/><path d="M725 560Q700 800 695 1090"/>
<path d="M860 525Q870 700 885 830 905 960 925 1000"/><path d="M885 870Q840 1000 785 1150"/><path d="M918 1000Q895 1130 875 1235"/><path d="M925 1000Q945 1130 955 1245"/><path d="M960 790Q950 900 950 980 990 1100 1020 1170"/>
<path d="M860 460 945 680 1040 900 1100 1080" stroke-width="24"/>
<path d="M1062 600 1120 780 1180 970" stroke-width="14"/>
<path d="M1160 650 1230 850 1260 920" stroke-width="12"/>
</g>
<g fill="none" stroke="#262626" stroke-width="3">
<path d="M160 175Q280 150 400 170T700 290L760 325"/><path d="M340 300 385 285 450 325 550 345 740 330"/>
<path d="M1200 550 1150 640 1065 590M1150 640 1200 665"/><path d="M880 385Q1050 390 1210 550"/>
</g>
<!-- spots -->
<g fill="#fff">
<ellipse cx="163" cy="172" rx="12" ry="8"/><ellipse cx="140" cy="212" rx="12" ry="20"/><ellipse cx="282" cy="181" rx="13" ry="12"/><ellipse cx="120" cy="278" rx="11" ry="18"/><ellipse cx="133" cy="352" rx="10" ry="16"/><ellipse cx="168" cy="402" rx="8" ry="12"/><ellipse cx="272" cy="473" rx="8" ry="11"/><ellipse cx="280" cy="532" rx="8" ry="15"/><ellipse cx="233" cy="523" rx="6" ry="8"/><ellipse cx="203" cy="498" rx="7" ry="6"/><ellipse cx="258" cy="585" rx="7" ry="8"/><ellipse cx="311" cy="594" rx="5" ry="9"/><ellipse cx="285" cy="624" rx="4" ry="10"/><ellipse cx="315" cy="675" rx="4" ry="9"/><ellipse cx="332" cy="645" rx="3" ry="6"/><ellipse cx="352" cy="725" rx="8" ry="13"/><ellipse cx="107" cy="405" rx="5" ry="6"/><ellipse cx="82" cy="340" rx="4" ry="5"/><ellipse cx="80" cy="247" rx="3" ry="5"/><ellipse cx="81" cy="280" rx="3" ry="4"/><ellipse cx="146" cy="446" rx="5" ry="4"/><ellipse cx="172" cy="459" rx="5" ry="6"/><ellipse cx="138" cy="305" rx="3" ry="5"/><ellipse cx="207" cy="410" rx="3" ry="2"/>
<ellipse cx="325" cy="145" rx="12" ry="13"/><ellipse cx="412" cy="138" rx="14" ry="5"/><ellipse cx="415" cy="157" rx="14" ry="3"/><ellipse cx="508" cy="155" rx="11" ry="5"/>
<ellipse cx="379" cy="825" rx="5" ry="10"/><ellipse cx="396" cy="858" rx="5" ry="10"/><ellipse cx="378" cy="915" rx="4" ry="7"/><ellipse cx="394" cy="970" rx="3" ry="7"/><ellipse cx="416" cy="1010" rx="5" ry="7"/><ellipse cx="408" cy="1062" rx="5" ry="6"/><ellipse cx="437" cy="1107" rx="4" ry="8"/><ellipse cx="475" cy="1100" rx="5" ry="5"/><ellipse cx="525" cy="1115" rx="3" ry="5"/><ellipse cx="638" cy="1127" rx="7" ry="9"/><ellipse cx="668" cy="1138" rx="6" ry="11"/><ellipse cx="695" cy="1120" rx="7" ry="11"/><ellipse cx="604" cy="1160" rx="5" ry="6"/><ellipse cx="555" cy="1150" rx="3" ry="5"/><ellipse cx="475" cy="1161" rx="5" ry="3"/><ellipse cx="515" cy="1178" rx="5" ry="8"/><ellipse cx="637" cy="1192" rx="6" ry="8"/><ellipse cx="665" cy="1193" rx="4" ry="7"/><ellipse cx="690" cy="1180" rx="5" ry="7"/><ellipse cx="557" cy="1207" rx="6" ry="6"/><ellipse cx="599" cy="1218" rx="7" ry="9"/><ellipse cx="415" cy="770" rx="4" ry="4"/><ellipse cx="715" cy="1110" rx="3" ry="12"/>
<ellipse cx="735" cy="1142" rx="9" ry="14"/><ellipse cx="750" cy="1180" rx="6" ry="8"/><ellipse cx="780" cy="1192" rx="5" ry="8"/><ellipse cx="722" cy="1200" rx="3" ry="10"/><ellipse cx="740" cy="1232" rx="3" ry="8"/><ellipse cx="762" cy="1250" rx="5" ry="11"/><ellipse cx="800" cy="1250" rx="5" ry="7"/><ellipse cx="847" cy="1283" rx="3" ry="5"/><ellipse cx="882" cy="1283" rx="3" ry="3"/><ellipse cx="790" cy="1308" rx="5" ry="5"/><ellipse cx="827" cy="1333" rx="6" ry="8"/><ellipse cx="875" cy="1340" rx="5" ry="7"/><ellipse cx="915" cy="1362" rx="4" ry="6"/><ellipse cx="963" cy="1350" rx="4" ry="6"/><ellipse cx="1002" cy="1330" rx="3" ry="5"/><ellipse cx="930" cy="1310" rx="4" ry="5"/><ellipse cx="1008" cy="1280" rx="5" ry="7"/><ellipse cx="1038" cy="1267" rx="3" ry="5"/><ellipse cx="1063" cy="1237" rx="5" ry="5"/><ellipse cx="1062" cy="1168" rx="6" ry="10"/><ellipse cx="1090" cy="1162" rx="3" ry="7"/><ellipse cx="1070" cy="1065" rx="4" ry="8"/>
<ellipse cx="1146" cy="450" rx="8" ry="5"/><ellipse cx="1232" cy="520" rx="12" ry="8"/><ellipse cx="1228" cy="537" rx="13" ry="5"/><ellipse cx="1304" cy="598" rx="12" ry="20"/><ellipse cx="1334" cy="668" rx="9" ry="14"/><ellipse cx="1271" cy="935" rx="7" ry="16"/><ellipse cx="1312" cy="938" rx="9" ry="20"/><ellipse cx="1345" cy="938" rx="3" ry="5"/><ellipse cx="1248" cy="975" rx="6" ry="16"/><ellipse cx="1208" cy="1005" rx="6" ry="11"/><ellipse cx="1292" cy="1012" rx="6" ry="9"/><ellipse cx="1325" cy="1017" rx="7" ry="8"/><ellipse cx="1362" cy="1010" rx="4" ry="10"/><ellipse cx="1180" cy="1030" rx="3" ry="5"/><ellipse cx="1255" cy="1042" rx="8" ry="7"/><ellipse cx="1224" cy="1055" rx="5" ry="8"/><ellipse cx="1187" cy="1073" rx="5" ry="6"/><ellipse cx="1137" cy="1087" rx="7" ry="16"/><ellipse cx="1190" cy="1108" rx="8" ry="3"/><ellipse cx="1148" cy="1125" rx="8" ry="3"/>
</g>
<g>
<ellipse cx="288" cy="228" rx="17" ry="25" fill="#b5b5b5"/><ellipse cx="387" cy="201" rx="17" ry="17" fill="#a5a5a5"/><ellipse cx="366" cy="257" rx="20" ry="14" fill="#a0a0a0"/><ellipse cx="249" cy="335" rx="18" ry="30" fill="#969696"/><ellipse cx="235" cy="440" rx="12" ry="20" fill="#b5b5b5"/>
<ellipse cx="1240" cy="598" rx="16" ry="25" fill="#a5a5a5"/><ellipse cx="1242" cy="661" rx="13" ry="26" fill="#a0a0a0"/><ellipse cx="1318" cy="705" rx="14" ry="30" fill="#a5a5a5"/><ellipse cx="1323" cy="825" rx="14" ry="35" fill="#a0a0a0"/>
</g>
<!-- body -->
<path d="M820 215Q860 225 865 290 870 380 860 450L835 520 800 800 775 1000 750 1070 725 1060 720 1000 740 800 770 500 775 350 790 250Z" fill="#030303"/>
<path d="M745 560 738 760 725 1000 720 1040 735 760Z" fill="#bbb" opacity=".55"/>
<path d="M835 540 815 760 800 830 815 700Z" fill="#ccc" opacity=".5"/>
<path d="M815 350 825 310 815 420Z" fill="#eee"/>
<path d="M735 850 770 860 755 1040 725 1030Z" fill="#161616"/>
<path d="M730 250 780 210 775 290 755 285Z" fill="#383838"/>
<g fill="#fff"><ellipse cx="815" cy="272" rx="3" ry="8"/><ellipse cx="845" cy="260" rx="3" ry="10"/><ellipse cx="825" cy="240" rx="3" ry="4"/><ellipse cx="798" cy="305" rx="4" ry="8"/><ellipse cx="855" cy="290" rx="3" ry="8"/></g>
</g></g>
<rect x="484.500" y="188.500" width="749" height="610" fill="none" stroke="#d2cf6a" stroke-width="1.200"/>
<text x="490" y="205" style="fill:#e2e2e2" textLength="55" lengthAdjust="spacingAndGlyphs">Flat Preview</text>
<text x="508" y="181" style="font-size:15px;fill:#f4f6f9;stroke:#000;stroke-width:2.200px;paint-order:stroke" textLength="103" lengthAdjust="spacingAndGlyphs">Preview: Shader</text>
<rect x="489.500" y="806.500" width="6" height="8" fill="#46709e" stroke="#123a63"/><path d="M491 809 492.500 812 495 803" fill="none" stroke="#000" stroke-width="1.400"/>
<rect x="489.500" y="820.500" width="6" height="8" fill="#46709e" stroke="#123a63"/><path d="M491 823 492.500 826 495 817" fill="none" stroke="#000" stroke-width="1.400"/>
<text x="501" y="813" style="fill:#1d2532" textLength="55" lengthAdjust="spacingAndGlyphs">Auto Update</text>
<text x="501" y="828" style="fill:#1d2532" textLength="62" lengthAdjust="spacingAndGlyphs">Checkerboard</text>
<rect x="1160.500" y="807.500" width="68" height="15" rx="3" fill="url(#bl)" stroke="#133a66" filter="url(#sh)"/>
<text class="d" x="1178" y="819" textLength="33" lengthAdjust="spacingAndGlyphs">Render</text>

<!-- curve dialog -->
<circle cx="1441" cy="760" r="9.500" fill="#8b99ad" stroke="#6f7a8b"/>
<path d="M1143 371V355Q1143 347 1151 347H1435Q1443 347 1443 355V371Z" fill="#232f44"/>
<path d="M1143 371H1443V755Q1443 763 1435 763H1151Q1143 763 1143 755Z" fill="#7d8799"/>
<path d="M1143.500 355Q1143.500 347.500 1151 347.500H1435Q1442.500 347.500 1442.500 355V755Q1442.500 762.500 1435 762.500H1151Q1143.500 762.500 1143.500 755Z" fill="none" stroke="#131b29"/>
<path d="M1143 371H1443" stroke="#0a0e16"/>
<circle cx="1152" cy="358.500" r="2.300" fill="none" stroke="#c6cfdb" stroke-width="1.500"/>
<rect x="1158.500" y="379.500" width="273" height="292" fill="none" stroke="#3e4859"/>
<path d="M1178.500 399.500H1413M1178.500 424.500H1413M1178.500 449.500H1413M1178.500 474.500H1413M1178.500 500.500H1413M1178.500 525.500H1413M1178.500 550.500H1413M1178.500 576.500H1413M1178.500 601.500H1413M1178.500 626.500H1413M1178.500 652H1413M1178.500 399V652M1201.500 399V652M1224.500 399V652M1248.500 399V652M1271.500 399V652M1295.500 399V652M1318.500 399V652M1341.500 399V652M1365.500 399V652M1388.500 399V652M1412.500 399V652" stroke="#a8cde8" fill="none"/>
<path d="M1179 653 1248 598 1290 565 1300 555 1340 500 1413 400" fill="none" stroke="#2f6ba0" stroke-width="2" stroke-linejoin="round"/>
<g fill="#2f6ba0"><circle cx="1179" cy="653" r="3"/><circle cx="1298" cy="558" r="3"/><circle cx="1413" cy="400" r="3"/></g>
<g filter="url(#sh)"><circle cx="1235" cy="707" r="12" fill="#8ab9e6" stroke="#dcd86c" stroke-width="2"/><circle cx="1265" cy="707" r="12" fill="#8ab9e6"/><circle cx="1295" cy="707" r="12" fill="#8ab9e6"/><circle cx="1326" cy="707" r="12" fill="#8ab9e6"/></g>
<path d="M1228 699 1242 702 1238 705 1245 712 1242 715 1235 708 1232 712Z" fill="#fff"/>
<path d="M1258 716 1262 711M1269 706 1276 700M1262 707H1268V712H1262Z M1288 716 1292 711M1299 706 1306 700M1292 708H1298V711H1292Z M1319 716 1322 712M1330 705 1336 702" stroke="#d5e6f5" fill="none"/><rect x="1322" y="704" width="8" height="8" fill="#c8dcf0"/>
<rect x="1386.500" y="718.500" width="7" height="7" fill="#586f90" stroke="#1b3a63"/>
<text x="1399" y="726" style="font-size:10.500px" textLength="34" lengthAdjust="spacingAndGlyphs">Smooth</text>
<rect x="1232.500" y="742" width="52" height="15" rx="3" fill="url(#bl)" stroke="#133a66" filter="url(#sh)"/>
<rect x="1299.500" y="742" width="52" height="15" rx="3" fill="url(#bl)" stroke="#133a66" filter="url(#sh)"/>
<text class="d" x="1243" y="754" textLength="31" lengthAdjust="spacingAndGlyphs" style="font-size:11px">Cancel</text>
<text x="1318" y="754" style="fill:#c5cc6a;font-size:11px" textLength="14" lengthAdjust="spacingAndGlyphs">OK</text>

<!-- right column -->
<path d="M1613.500 850V68Q1613.500 62.500 1618 62.500H1654Q1659 62.500 1659.500 68V79.500H1848" fill="none" stroke="#0a0e16"/>
<path d="M1614 763V69Q1614 63 1620 63H1654Q1659 63 1659 69V80H1849V763Z" fill="#7d8799"/>
<path d="M1613.500 763H1849M1613.500 80V763" stroke="#0a0e16"/>
<rect x="1849" y="80" width="3" height="683" fill="#e9ebee"/>
<rect x="1848.500" y="79" width="3.500" height="11" fill="#e4e245" stroke="#3b3a10" stroke-width=".8"/>
<rect x="1848.500" y="752" width="3.500" height="11" fill="#e4e245" stroke="#3b3a10" stroke-width=".8"/>
<path d="M1613 772.500H1858" stroke="#e9ebee" stroke-width="1"/><path d="M1613 774H1858" stroke="#0a0e16"/>
<rect x="1711" y="768.500" width="49" height="10" rx="5" fill="url(#bl)" stroke="#133a66"/><rect x="1731" y="772" width="9" height="2.500" fill="#dbe7f3" stroke="#123a63" stroke-width=".5"/>
<path d="M1613.500 802V790Q1613.500 786.500 1617 786.500H1660Q1663 786.500 1663.500 790V802Z" fill="#3b4658" stroke="#0e1420"/>
<path d="M1663.500 802V787H1713Q1715 787 1715 790V802Z" fill="#3b4658" stroke="#0e1420"/>
<path d="M1715 802V789Q1715 785.500 1718 785.500H1761Q1765 785.500 1765 789V803Z" fill="#7d8799" stroke="#0e1420"/>
<text class="w" x="1620" y="800" style="font-size:11px" textLength="35" lengthAdjust="spacingAndGlyphs">Preview</text>
<text class="w" x="1667" y="800" style="font-size:11px" textLength="42" lengthAdjust="spacingAndGlyphs">Instances</text>
<text class="t" x="1721" y="800" style="font-size:11px" textLength="37" lengthAdjust="spacingAndGlyphs">Shaders</text>
<path d="M1614 803H1849V1071H1614Z" fill="#7d8799"/>
<path d="M1613.500 802.500V1071.500H1849M1765 802.500H1849" fill="none" stroke="#0a0e16"/>
<rect x="1849" y="803" width="3" height="266" fill="#e9ebee"/>
<rect x="1848.500" y="804" width="3.500" height="11" fill="#e4e245" stroke="#3b3a10" stroke-width=".8"/>
<rect x="1848.500" y="1058" width="3.500" height="11" fill="#e4e245" stroke="#3b3a10" stroke-width=".8"/>
<rect x="1622" y="804" width="62" height="62" fill="#3b4658"/><rect x="1623" y="852" width="60" height="12" fill="#8cbbe8"/>
<rect x="1700" y="804" width="62" height="62" fill="#3b4658"/><rect x="1701" y="852" width="60" height="12" fill="#8cbbe8"/>
<circle cx="1653" cy="827" r="14.500" fill="url(#sg)"/><circle cx="1731" cy="827" r="14.500" fill="url(#sw)"/>
<text class="l" x="1638" y="862" textLength="29" lengthAdjust="spacingAndGlyphs">Default</text>
<text class="l" x="1716" y="862" textLength="29" lengthAdjust="spacingAndGlyphs">Shader</text>

<!-- splitters -->
<rect x="1603" y="527" width="8" height="48" rx="4" fill="#5b8fc6" stroke="#133a66"/>
<rect x="0" y="876" width="1603" height="3" fill="#8d98aa"/>
<rect x="777" y="874" width="48" height="8" rx="4" fill="#5b8fc6" stroke="#133a66"/><rect x="796" y="877" width="10" height="2" fill="#dbe7f3"/>

<!-- animate bar -->
<rect x="5.500" y="887.500" width="60" height="14" fill="#4a80b7" stroke="#123a63"/>
<text class="w" x="18" y="899" style="font-size:11px" textLength="37" lengthAdjust="spacingAndGlyphs">Animate</text>
<use href="#btn" x="74" y="886.500"/><use href="#btn" x="91.500" y="886.500"/><use href="#btn" x="109" y="886.500"/><use href="#btn" x="126" y="886.500"/><use href="#btn" x="143" y="886.500"/><use href="#btn" x="160" y="886.500"/>
<use href="#btn" x="185.500" y="886.500"/>
<use href="#btn" x="211" y="886.500"/><use href="#btn" x="228" y="886.500"/><use href="#btn" x="245" y="886.500"/><use href="#btn" x="262" y="886.500"/>
<path d="M79 890H81V899H79ZM88 890V899L82 894.500ZM103 890V899L98 894.500ZM98 890V899L93 894.500ZM113 890H122V899H113ZM131 890 139 894.500 131 899ZM148 890 153 894.500 148 899ZM153 890 158 894.500 153 899ZM165 890 171 894.500 165 899ZM172 890H174V899H172ZM190 892H200V899H190ZM192 890H198V892H192ZM222 890V899L216 894.500ZM274 890 280 894.500 274 899Z" fill="#eef2f7"/>
<path d="M194 890 195 893 196 890" stroke="#123a63" fill="none"/>
<circle cx="233" cy="894" r="2.500" fill="none" stroke="#fff" stroke-width="1.200"/><path d="M236 894H243M240 894V897M243 894V897" stroke="#fff" stroke-width="1.200"/>
<path d="M250 891H258M251.500 892 252.500 899H256L257 892M254 889V891" fill="none" stroke="#fff" stroke-width="1.200"/>
<rect x="291" y="888.500" width="1027" height="8" rx="4" fill="#283347"/><path d="M293 893H1316" stroke="#e6e9ee" stroke-width="2"/>
<path d="M300 889 304 895H296Z" fill="#9ec6ee" stroke="#10243e" stroke-width=".6"/>
<rect x="1331.500" y="885.500" width="55" height="16" fill="#243045" stroke="#4f5b70"/>
<rect x="1398.500" y="885.500" width="55" height="16" fill="#243045" stroke="#4f5b70"/>
<text x="1334" y="897" textLength="41" lengthAdjust="spacingAndGlyphs" style="font-size:11px;fill:#aeb8c7">00:00:00</text>
<text x="1401" y="897" textLength="41" lengthAdjust="spacingAndGlyphs" style="font-size:11px;fill:#aeb8c7">00:07:00</text>
<text x="1392" y="898" style="font-size:10px;fill:#2b3545">/</text>
<rect x="1461.500" y="886.500" width="17" height="15" fill="#3f76ae" stroke="#123a63"/><path d="M1464 889 1476 899M1476 889 1464 899" stroke="#eef3f8" stroke-width="2.500"/>
<rect x="1485.500" y="886" width="49" height="14.500" rx="2.500" fill="url(#bl)" stroke="#133a66"/><use href="#chev" x="1530" y="893"/>
<rect x="1543.500" y="886" width="50" height="14.500" rx="2.500" fill="url(#bl)" stroke="#133a66"/><use href="#chev" x="1589" y="893"/>
<text class="d" x="1488" y="899" textLength="22" lengthAdjust="spacingAndGlyphs" style="font-size:11px">Time</text>
<text class="d" x="1546" y="899" textLength="28" lengthAdjust="spacingAndGlyphs" style="font-size:11px">24 fps</text>

<!-- sequencer -->
<rect x="25" y="911" width="1570" height="160" fill="#7d8799"/>
<rect x="25" y="1071" width="1570" height="9" fill="#3b4658"/>
<path d="M25 911.500H1594.500V1071.500H25" fill="none" stroke="#0a0e16"/>
<path d="M25 972V1017Q25 1020 20 1020H12Q8 1020 8 1016V972Z" fill="#7d8799" stroke="#0e1420"/>
<path d="M25 911H13Q8 911 8 915V970Q8 972 12 972H25V1071" fill="#7d8799" stroke="#0e1420"/>
<text class="t" transform="translate(22,968) rotate(-90)" textLength="48" lengthAdjust="spacingAndGlyphs" x="0" y="0" style="font-size:11px">Sequencer</text>
<text class="t" transform="translate(22,1017) rotate(-90)" textLength="37" lengthAdjust="spacingAndGlyphs" x="0" y="0" style="font-size:11px">Browser</text>
<path d="M33 1071V933.500H1591" fill="none" stroke="#0a0e16"/>
<rect x="33.500" y="915.500" width="86" height="15" rx="3" fill="url(#bl)" stroke="#133a66" filter="url(#sh)"/><use href="#chev" x="114" y="922"/>
<text class="d" x="36" y="927" textLength="48" lengthAdjust="spacingAndGlyphs" style="font-size:11px">Sequencer</text>
<g filter="url(#sh)">
<path d="M152 916 164 925 159 926 163 932 161 933 157 928 153 931Z" fill="#fff"/>
<circle cx="185" cy="924" r="4" fill="none" stroke="#fff" stroke-width="1.500"/><path d="M185 916V918M185 930V932M177 924H179M191 924H193M179 918 181 920M189 928 191 930M179 930 181 928M189 920 191 918" stroke="#fff"/>
<circle cx="212" cy="922" r="4.500" fill="none" stroke="#fff" stroke-width="1.800"/><path d="M215 926 220 931" stroke="#fff" stroke-width="2.500"/>
</g>
<use href="#bt2" x="239" y="914.500"/><use href="#bt2" x="260" y="914.500"/>
<path d="M243 918H253V928H243ZM245 926 251 920M264 918H274M264 925H275M268 918V925M264 928H275" fill="none" stroke="#fff"/>
<text x="289" y="927" textLength="14" lengthAdjust="spacingAndGlyphs" style="font-size:11px">Do:</text>
<rect x="307.500" y="915.500" width="11" height="15" rx="3" fill="url(#bl)" stroke="#133a66"/><use href="#chev" x="313" y="923"/>
<rect x="331.500" y="919.500" width="7" height="8" fill="#5f7ea6" stroke="#1b3a63"/><path d="M333 922 335 926 338 916" fill="none" stroke="#000" stroke-width="1.500"/>
<text x="344" y="929" textLength="23" lengthAdjust="spacingAndGlyphs" style="font-size:11px">Snap</text>
<use href="#bt2" x="406" y="914.500"/><use href="#bt2" x="427" y="914.500"/><use href="#bt2" x="449" y="914.500"/><use href="#bt2" x="478" y="914.500"/><use href="#bt2" x="499" y="914.500"/><use href="#bt2" x="528" y="914.500"/><use href="#bt2" x="549" y="914.500"/>
<g fill="none" stroke="#fff" stroke-width="1.300"><path d="M409 928Q413 927 415 923T422 918"/><path d="M430 929 436 918 442 929"/><path d="M452 929Q452 918 458 918T464 929"/><path d="M481 929 485 920H491L494 929"/><path d="M502 929 506 920Q510 918 512 922L515 929"/><path d="M531 929 534 918H541L544 929"/><path d="M552 929 555 921H561L564 929M558 916V919M552 918 554 920M564 918 562 920"/></g>
<rect x="534" y="920" width="7" height="6" fill="#fff"/><rect x="555" y="921" width="6" height="5" fill="#fff"/>

<!-- list -->
<text x="36" y="951" textLength="35" lengthAdjust="spacingAndGlyphs" style="font-size:11px">Filtering</text>
<rect x="140.500" y="937.500" width="11" height="15" rx="3" fill="url(#bl)" stroke="#133a66"/><use href="#chev" x="146" y="945"/>
<path d="M33 957H233" stroke="#05070b"/>
<g clip-path="url(#listc)">
<rect x="33" y="958" width="200" height="16" fill="url(#rowd)"/>
<rect x="33" y="1006" width="200" height="16" fill="url(#rowd)"/>
<rect x="33" y="1023" width="200" height="16" fill="url(#rowd)"/>
<path d="M33 974.500H233M33 990.500H233M33 1005.500H233M33 1022.500H233M33 1039.500H233M33 1055.500H233" stroke="#c3ccdb"/>
<path d="M33 990H233M33 1005H233M33 1055H233" stroke="#3b4658"/>
<path d="M38 963H48L43 969ZM38 1011H48L43 1017ZM38 1028H48L43 1034Z" fill="#fff"/>
<path d="M50 976 55 982 50 988ZM50 991 55 997 50 1003ZM50 1040 55 1046 50 1052ZM50 1057 55 1063 50 1069Z" fill="#fff"/>
<text class="w" x="50" y="970" textLength="39" lengthAdjust="spacingAndGlyphs" style="font-size:11px">Universe</text>
<text x="62" y="986" textLength="43" lengthAdjust="spacingAndGlyphs" style="font-size:11px">Camera 1</text>
<text x="62" y="1002" textLength="29" lengthAdjust="spacingAndGlyphs" style="font-size:11px">Light 1</text>
<text class="w" x="50" y="1018" textLength="67" lengthAdjust="spacingAndGlyphs" style="font-size:11px">Master Objects</text>
<text class="w" x="50" y="1035" textLength="68" lengthAdjust="spacingAndGlyphs" style="font-size:11px">Master Shaders</text>
<text x="60" y="1051" textLength="32" lengthAdjust="spacingAndGlyphs" style="font-size:11px">Default</text>
<text x="60" y="1067" textLength="32" lengthAdjust="spacingAndGlyphs" style="font-size:11px">Shader</text>
</g>
<rect x="33" y="1067" width="200" height="3" fill="#e9ebee"/>
<rect x="34" y="1066" width="10" height="5" fill="#d6d43f" stroke="#3b3a10" stroke-width=".8"/>
<rect x="221" y="1066" width="10" height="5" fill="#d6d43f" stroke="#3b3a10" stroke-width=".8"/>
<rect x="233" y="934" width="3.500" height="137" fill="#000"/>

<!-- ruler -->
<rect x="236.500" y="934" width="491" height="23" fill="#364153"/>
<rect x="727" y="934" width="360" height="23" fill="#2e3849"/>
<rect x="1087" y="934" width="504" height="23" fill="#1c2029"/>
<rect x="236.500" y="954" width="1354" height="3" fill="url(#ticks)"/>
<path d="M247.500 949V957M367.500 949V957M487.500 949V957M607.500 949V957M727.500 949V957M847.500 949V957M967.500 949V957M1087.500 949V957M1207.500 949V957M1327.500 949V957M1447.500 949V957M1567.500 949V957" stroke="#0a0d14"/>
<path d="M236 957.500H1591" stroke="#05070b"/>
<g text-anchor="middle">
<text x="248" y="946" style="font-size:11.500px;fill:#dfe3ea">0s</text>
<text x="368" y="946" style="font-size:11.500px;fill:#dfe3ea">1s</text>
<text x="488" y="946" style="font-size:11.500px;fill:#dfe3ea">2s</text>
<text x="608" y="946" style="font-size:11.500px;fill:#dfe3ea">3s</text>
<text x="728" y="946" style="font-size:11.500px;fill:#dfe3ea">4s</text>
<text x="848" y="946" style="font-size:11.500px;fill:#dfe3ea">5s</text>
<text x="968" y="946" style="font-size:11.500px;fill:#dfe3ea">6s</text>
<text x="1088" y="946" style="font-size:11.500px;fill:#c5cad2">7s</text>
<text x="1208" y="946" style="font-size:11.500px;fill:#6d717a">8s</text>
<text x="1328" y="946" style="font-size:11.500px;fill:#6d717a">9s</text>
<text x="1448" y="946" style="font-size:11.500px;fill:#6d717a">10s</text>
<text x="1568" y="946" style="font-size:11.500px;fill:#6d717a">11s</text>
</g>
<path d="M236 934H258L247.500 944Z" fill="#4a7fb8" opacity=".95"/>
<path d="M714 934H727V945Z" fill="#a6a22d"/><path d="M721 941 726 946" stroke="#fff" stroke-width="1.200"/>

<!-- tracks -->
<g clip-path="url(#trackc)">
<rect x="236" y="958" width="491" height="110" fill="#7d8799"/>
<rect x="727" y="958" width="360" height="110" fill="#646d7c"/>
<rect x="1087" y="958" width="504" height="110" fill="#3b3f49"/>
<path d="M236 982.500H727M236 997.500H727M236 1047.500H727M236 1060.500H727" stroke="#767f90" stroke-width="15"/>
<path d="M727 982.500H1087M727 997.500H1087M727 1047.500H1087M727 1060.500H1087" stroke="#5d6672" stroke-width="15"/>
<path d="M1087 982.500H1591M1087 997.500H1591M1087 1047.500H1591M1087 1060.500H1591" stroke="#353840" stroke-width="15"/>
<path d="M236 990.500H727M236 1055.500H727" stroke="#838d9e"/><path d="M727 990.500H1087M727 1055.500H1087" stroke="#6c7585"/>
<path d="M247.500 957V1070" stroke="#000"/>
<path d="M247.500 980 252 989H243ZM247.500 994 252 1005H243ZM247.500 1043 252 1055H243ZM247.500 1059 252 1070H243Z" fill="#000"/>
</g>
<rect x="1590" y="958" width="3" height="110" fill="#e9ebee"/>
<rect x="1588.500" y="970" width="6" height="43" rx="2" fill="#5b8fc6" stroke="#133a66"/>
<rect x="1590" y="958" width="3" height="11" fill="#e4e245" stroke="#3b3a10" stroke-width=".8"/>
<rect x="1590" y="1056" width="3" height="11" fill="#e4e245" stroke="#3b3a10" stroke-width=".8"/>
<rect x="236" y="1067" width="1355" height="3" fill="#e9ebee"/>
<rect x="237" y="1066" width="10" height="5" fill="#d6d43f" stroke="#3b3a10" stroke-width=".8"/>
<rect x="1580" y="1066" width="10" height="5" fill="#d6d43f" stroke="#3b3a10" stroke-width=".8"/>
<rect x="250" y="1065" width="1237" height="6" rx="2" fill="#5b92cc" stroke="#133a66"/>
</svg>
</body></html>
